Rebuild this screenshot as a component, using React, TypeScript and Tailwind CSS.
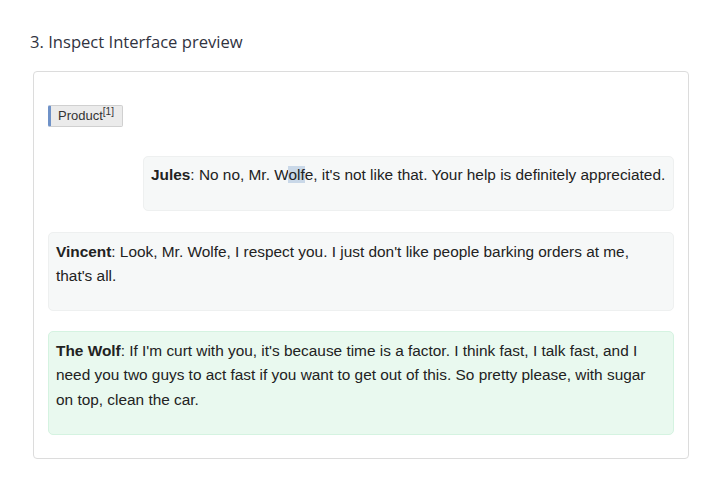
import React from "react";

const bodyFont = { fontFamily: '"Liberation Sans", Arial, sans-serif' };

export default function App() {
  return (
    <div className="w-[708px] h-[482px] bg-white pt-[28px] px-[30px]">
      <h3
        className="text-[16.6px] leading-[28px] text-[#31333f] mb-[15px] ml-0"
        style={{ fontFamily: '"Open Sans", sans-serif' }}
      >
        3. Inspect Interface preview
      </h3>
      <div
        className="ml-[3px] w-[656px] h-[388px] border border-[#dcdcdc] rounded-[4px] px-[14px] pt-[33px]"
        style={bodyFont}
      >
        <div className="flex">
          <span className="inline-flex items-center h-[22px] pl-[7px] pr-[8px] bg-[#ebebeb] border border-[#d0d0d0] border-l-[3px] border-l-[#6f92c8] rounded-[2px] text-[13px] text-[#333]">
            Product<sup className="text-[10px] -top-[4px]">[1]</sup>
          </span>
        </div>
        <div className="mt-[29px] flex justify-end">
          <div className="w-[531px] whitespace-nowrap bg-[#f6f8f8] border border-[#eef0f0] rounded-[5px] pl-[7px] pr-[4px] pt-[6px] pb-[22px] text-[15.4px] leading-[24.5px] text-[#222]">
            <b>Jules</b>: No no, Mr. W
            <span className="bg-[#c9d8e8]">olf</span>e, it's not like that. Your
            help is definitely appreciated.
          </div>
        </div>
        <div className="mt-[21px] bg-[#f6f8f8] border border-[#eef0f0] rounded-[5px] pl-[7px] pr-[8px] pt-[7px] pb-[21px] text-[15.4px] leading-[24.5px] text-[#222]">
          <b>Vincent</b>: Look, Mr. Wolfe, I respect you. I just don't like
          people barking orders at me, that's all.
        </div>
        <div className="mt-[20px] bg-[#e9f9ef] border border-[#d5f3e1] rounded-[5px] pl-[7px] pr-[8px] pt-[7px] pb-[22px] text-[15.4px] leading-[24.5px] text-[#222]">
          <b>The Wolf</b>: If I'm curt with you, it's because time is a factor.
          I think fast, I talk fast, and I need you two guys to act fast if you
          want to get out of this. So pretty please, with sugar on top, clean
          the car.
        </div>
      </div>
    </div>
  );
}
